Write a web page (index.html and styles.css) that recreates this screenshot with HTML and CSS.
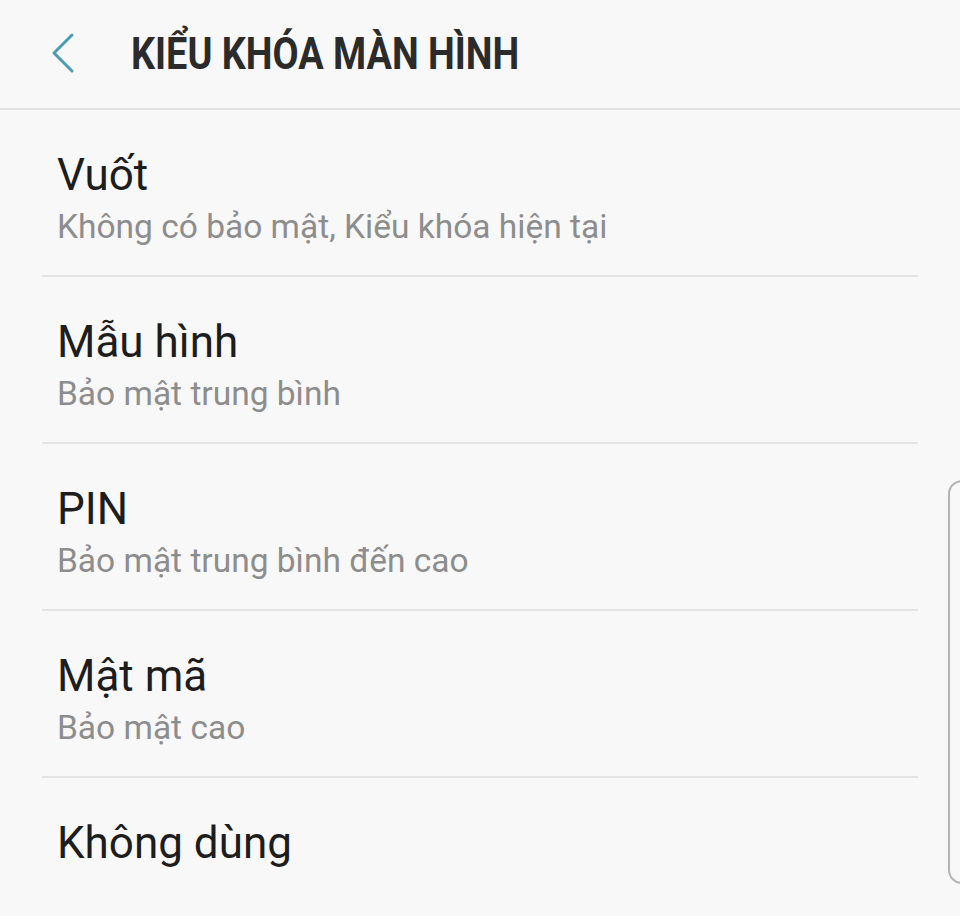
FILE: index.html
```html
<!DOCTYPE html>
<html lang="vi">
<head>
    <meta charset="UTF-8">
    <meta name="viewport" content="width=device-width,initial-scale=1" />
    <title>Kiểu khóa màn hình</title>
    <link rel="stylesheet" href="styles.css">
</head>
<body>
    <div class="header">
        <a class="back" href="">
            <svg width="30" height="44" viewBox="0 0 30 44">
                <polyline points="21,4 3,22 21,40" fill="none" stroke="#4a9cb3" stroke-width="3" stroke-linecap="round" stroke-linejoin="round"/>
            </svg>
        </a>
        <p class="title"><span>KIỂU KHÓA MÀN HÌNH</span></p>
    </div>
    <div class="list">
        <div class="row">
            <p class="name">Vuốt</p>
            <p class="desc">Không có bảo mật, Kiểu khóa hiện tại</p>
        </div>
        <div class="row">
            <p class="name">Mẫu hình</p>
            <p class="desc">Bảo mật trung bình</p>
        </div>
        <div class="row">
            <p class="name">PIN</p>
            <p class="desc">Bảo mật trung bình đến cao</p>
        </div>
        <div class="row">
            <p class="name">Mật mã</p>
            <p class="desc">Bảo mật cao</p>
        </div>
        <div class="row last">
            <p class="name">Không dùng</p>
        </div>
    </div>
    <div class="scroller"></div>
</body>
</html>
```

FILE: styles.css
```css
html, body{
    margin: 0;
    height: 100%;
    overflow: hidden;
}
body{
    background-color: #f8f8f8;
    font-family: Roboto, "Liberation Sans", sans-serif;
    position: relative;
}
p{
    margin: 0;
}
.header{
    height: 106px;
    border-bottom: 2px solid #e3e3e3;
    display: flex;
    align-items: center;
    padding-top: 2px;
}
.back{
    display: flex;
    margin-left: 51px;
    margin-top: -4px;
}
.title{
    margin-left: 50px;
    margin-top: -3px;
    font-size: 44px;
    font-weight: bold;
    color: #2b2b2b;
    line-height: 52px;
    white-space: nowrap;
}
.title span{
    display: inline-block;
    transform: scaleX(0.86);
    transform-origin: left center;
}
.row{
    margin: 0 42px;
    padding: 39px 0 22px 15px;
    border-bottom: 2px solid #e4e4e4;
}
.row.last{
    border-bottom: 0;
}
.name{
    font-size: 44px;
    line-height: 52px;
    color: #1d1d1d;
}
.desc{
    font-size: 33.5px;
    line-height: 52px;
    color: #8d8d8d;
}
.scroller{
    position: absolute;
    left: 948px;
    top: 480px;
    width: 30px;
    height: 400px;
    border: 2px solid #b3b3b3;
    border-radius: 14px;
}
```
